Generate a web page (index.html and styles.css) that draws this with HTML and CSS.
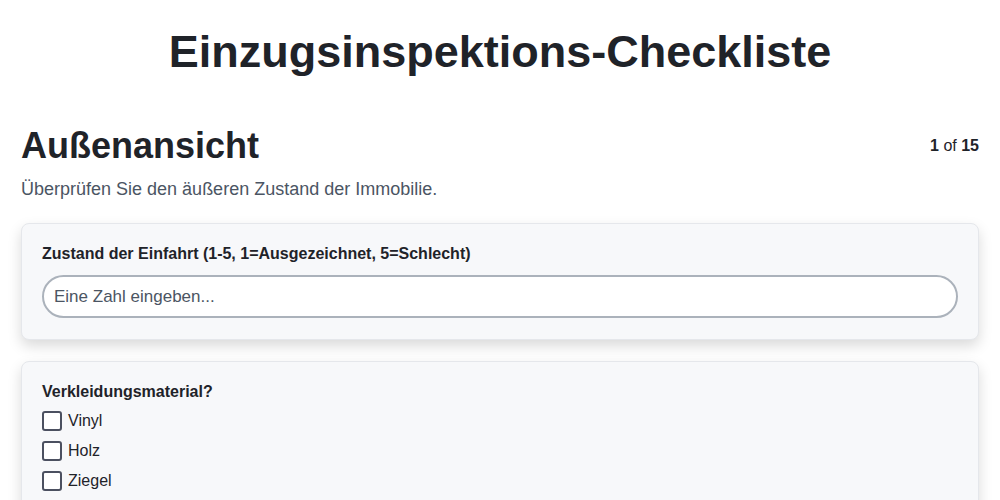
FILE: index.html
```html
<!DOCTYPE html>
<html lang="de">

<head>
    <title>Einzugsinspektions-Checkliste</title>
    <meta charset="UTF-8">
    <meta name="viewport" content="width=device-width, initial-scale=1">
    <link rel="stylesheet" href="styles.css">
</head>

<body>
    <div class="page">
        <h1 class="page-title">Einzugsinspektions-Checkliste</h1>

        <div class="section-head">
            <h2 class="section-title">Außenansicht</h2>
            <span class="step-count"><b>1</b> of <b>15</b></span>
        </div>
        <p class="section-desc">Überprüfen Sie den äußeren Zustand der Immobilie.</p>

        <div class="question-card">
            <label class="question-label" for="driveway">Zustand der Einfahrt (1-5, 1=Ausgezeichnet, 5=Schlecht)</label>
            <input type="number" class="text-field" id="driveway" placeholder="Eine Zahl eingeben...">
        </div>

        <div class="question-card">
            <div class="question-label tight">Verkleidungsmaterial?</div>
            <label class="check-row"><input type="checkbox" class="check-box"> Vinyl</label>
            <label class="check-row"><input type="checkbox" class="check-box"> Holz</label>
            <label class="check-row"><input type="checkbox" class="check-box"> Ziegel</label>
            <label class="check-row"><input type="checkbox" class="check-box"> Stuck</label>
        </div>
    </div>
</body>

</html>
```

FILE: styles.css
```css
body {
    margin: 0;
    padding: 0;
    background-color: #fff;
    color: #1f2329;
    font-family: "Liberation Sans", Arial, sans-serif;
}

.page {
    padding: 0 21px;
}

.page-title {
    margin: 0;
    padding-top: 24px;
    font-size: 45px;
    line-height: 56px;
    text-align: center;
    color: #1f2329;
}

.section-head {
    display: flex;
    justify-content: space-between;
    align-items: center;
    margin-top: 45px;
}

.section-title {
    margin: 0;
    font-size: 36px;
    line-height: 42px;
}

.step-count {
    font-size: 16px;
    color: #1f2329;
}

.section-desc {
    margin: 12px 0 0 0;
    font-size: 18px;
    color: #4b5563;
}

.question-card {
    background-color: #f7f8fa;
    border: 1px solid #e5e7eb;
    border-radius: 8px;
    box-shadow: 0 6px 14px rgba(0, 0, 0, 0.15);
    padding: 21px 20px 21px 20px;
    margin-top: 23px;
    display: flex;
    flex-direction: column;
}

.question-card + .question-card {
    margin-top: 21px;
}

.question-label {
    font-size: 16px;
    font-weight: bold;
    margin-bottom: 12px;
}

.question-label.tight {
    margin-bottom: 5px;
}

.text-field {
    height: 43px;
    box-sizing: border-box;
    border: 2px solid #abb2bb;
    border-radius: 22px;
    background: #fff;
    padding: 0 10px;
    font-size: 17px;
    font-family: "Liberation Sans", Arial, sans-serif;
    color: #1f2329;
    outline: none;
    -moz-appearance: textfield;
}

.text-field::placeholder {
    color: #4b5563;
}

.text-field::-webkit-inner-spin-button,
.text-field::-webkit-outer-spin-button {
    -webkit-appearance: none;
    margin: 0;
}

.check-row {
    display: flex;
    align-items: center;
    gap: 6px;
    height: 30px;
    font-size: 16px;
}

.check-box {
    appearance: none;
    -webkit-appearance: none;
    width: 20px;
    height: 20px;
    margin: 0;
    border: 2px solid #4b5060;
    border-radius: 3px;
    background: #fff;
    box-sizing: border-box;
}
```
